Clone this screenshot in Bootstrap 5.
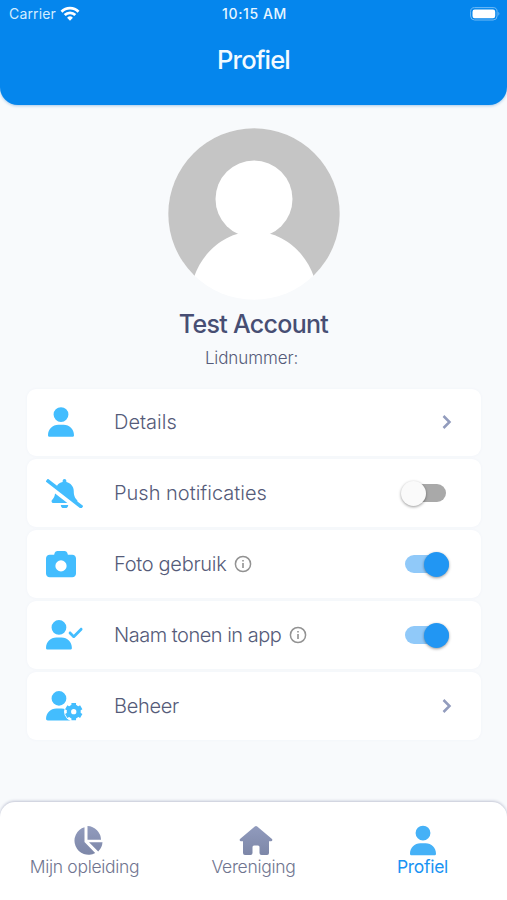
<!DOCTYPE html>
<html lang="nl">
<head>
<meta charset="utf-8">
<meta name="viewport" content="width=device-width, initial-scale=1">
<title>Profiel</title>
<link href="https://cdn.jsdelivr.net/npm/bootstrap@5.3.0/dist/css/bootstrap.min.css" rel="stylesheet">
<style>
body{font-family:Inter,"Open Sans",sans-serif;background:#f8fafc;color:#555b79;height:900px;overflow:hidden}
svg{display:block;flex:none}
.app-head{height:105px;background:#0586ed;border-radius:0 0 18px 18px;box-shadow:0 1px 3px #a9c9e8}
.status{height:27px;padding:0 7px 0 9px;font-size:14px}
.status>*{flex:1 1 0}
.carrier{color:#d3edff;letter-spacing:.15px}
.clock{font-size:14px;font-weight:500;letter-spacing:.6px;color:#e8f6ff}
.page-title{font-size:25.5px;line-height:30px;font-weight:500;letter-spacing:-.85px;margin-top:18px;color:#f3faff}
.avatar{margin:23px auto 0}
.who{font-size:25px;line-height:30px;font-weight:500;letter-spacing:-.7px;margin-top:9px;color:#474e73}
.member{font-size:17px;line-height:22px;font-weight:300;letter-spacing:-.1px;margin-top:8px;margin-right:4px}
.options{margin:19.5px 26px 0 27px;gap:3px}
.option{height:67.9px;border-radius:9px;background:#fff;box-shadow:0 0 3px #f0f2f8;padding:0 28px 0 19px}
.glyph{width:68px;color:#43bdfe}
.label{font-size:20px;font-weight:300;letter-spacing:-.5px;line-height:26px;white-space:nowrap}
.label.wide{letter-spacing:0}
.label.mid{letter-spacing:-.3px}
.toggle{width:44px;height:18px;border-radius:9px;background:#90c9f9;margin-right:4px}
.toggle i{width:25px;height:25px;border-radius:50%;background:#2196f3;box-shadow:0 1px 3px #0006}
.toggle.off{background:#a9a9a9;width:41px;margin-right:7px}
.toggle.off i{background:#fafafa;margin-left:-4px}
.tabs{height:98.5px;background:#fff;border-radius:15px 15px 0 0;box-shadow:0 -1px 3px #bfc3d3;padding-top:23px}
.tab{flex:1 1 0;font-size:17.5px;font-weight:300;line-height:22px;color:#70758f;white-space:nowrap;letter-spacing:-.3px}
.tab .pie{margin-left:4px}
.tab.current{color:#1993f3;font-weight:400}
</style>
<script src="https://cdn.jsdelivr.net/npm/bootstrap@5.3.0/dist/js/bootstrap.bundle.min.js"></script>
</head>
<body class="d-flex flex-column">
<svg width="0" height="0" class="position-absolute">
<defs>
<linearGradient id="slate" x2="0" y2="1"><stop stop-color="#919bbd"/><stop offset="1" stop-color="#7d87a8"/></linearGradient>
<symbol id="user" viewBox="0 0 448 512"><path d="M224 256A128 128 0 1 0 224 0a128 128 0 1 0 0 256zm-45.700 48C79.800 304 0 383.800 0 482.300C0 498.700 13.300 512 29.700 512H418.300c16.400 0 29.700-13.300 29.700-29.700C448 383.800 368.200 304 269.700 304H178.300z"/></symbol>
<symbol id="info" viewBox="0 0 18 18"><circle cx="9" cy="9" r="7.600" fill="none" stroke="#929292" stroke-width="1.500"/><path d="M8.200 8h1.600v5H8.200zM8.200 5h1.600v1.600H8.200z" fill="#929292"/></symbol>
<symbol id="next" viewBox="0 0 12 18"><path d="M2.500 3l6 6-6 6" fill="none" stroke="#929cbd" stroke-width="2.500"/></symbol>
</defs>
</svg>

<header class="app-head">
  <div class="status d-flex align-items-center">
    <div class="carrier d-flex align-items-center gap-1"><span>Carrier</span>
      <svg width="20" height="16" viewBox="0 0 20 16" fill="none" stroke="#fff" stroke-width="2.800"><path d="M1.500 5.700a12 12 0 0 1 17 0M4.700 9a7.500 7.500 0 0 1 10.600 0"/><path d="M10 14.700l-2.900-3a4.100 4.100 0 0 1 5.800 0z" fill="#fff" stroke="none"/></svg>
    </div>
    <div class="clock text-center">10:15 AM</div>
    <div class="d-flex justify-content-end"><svg width="30" height="14" viewBox="0 0 30 14"><rect x=".600" y=".600" width="26.500" height="12.400" rx="4" fill="none" stroke="#70baf5"/><rect x="2.500" y="2.500" width="22.700" height="8.700" rx="2.200" fill="#fff"/><path d="M28.400 4.800q2 2 0 4z" fill="#70baf5"/></svg></div>
  </div>
  <h1 class="page-title text-center mb-0">Profiel</h1>
</header>

<main class="flex-grow-1">
  <svg class="avatar" width="172" height="172" viewBox="0 0 172 172"><clipPath id="round"><circle cx="86" cy="86" r="85.700"/></clipPath><g clip-path="url(#round)"><path fill="#fff" d="M0 0h172v172H0z"/><path fill="#c5c5c5" d="M0 0h172v148H0z"/><circle cx="86" cy="71" r="38.500" fill="#fff"/><path fill="#fff" d="M26 149C35 123 58 103.500 86 103.500s51 19.500 60 45.500z"/></g></svg>
  <h2 class="who text-center mb-0">Test Account</h2>
  <p class="member text-center mb-0">Lidnummer:</p>

  <div class="options d-flex flex-column">
    <div class="option d-flex align-items-center">
      <div class="glyph"><svg style="margin-left:2px" width="26" height="30" fill="currentColor"><use href="#user"/></svg></div>
      <span class="label wide">Details</span><svg class="ms-auto" width="12" height="18"><use href="#next"/></svg>
    </div>
    <div class="option d-flex align-items-center">
      <div class="glyph"><svg width="37" height="29.600" viewBox="0 0 640 512" fill="currentColor"><path d="M633.820 458.100l-90.620-70.050c.190-1.380.800-2.660.800-4.060.050-7.550-2.610-15.270-8.610-21.710-19.320-20.760-55.470-51.990-55.470-154.290 0-77.700-54.480-139.900-127.940-155.160V32c0-17.670-14.320-32-31.980-32s-31.980 14.330-31.980 32v20.840c-40.330 8.380-74.660 31.070-97.590 62.570L45.470 3.370C38.490-2.050 28.430-.800 23.010 6.180L3.370 31.450C-2.050 38.420-.800 48.470 6.180 53.900l588.350 454.730c6.980 5.430 17.030 4.170 22.460-2.810l19.640-25.270c5.420-6.970 4.170-17.020-2.810-22.450zM157.230 251.540c-8.610 67.960-36.410 93.330-52.620 110.750-6 6.450-8.660 14.160-8.610 21.710.110 16.400 12.980 32 32.100 32h241.120L157.230 251.540zM320 512c35.320 0 63.970-28.650 63.970-64H256.030c0 35.350 28.650 64 63.970 64z"/></svg></div>
      <span class="label wide">Push notificaties</span><div class="toggle off ms-auto d-flex align-items-center"><i></i></div>
    </div>
    <div class="option d-flex align-items-center">
      <div class="glyph"><svg width="30" height="30" viewBox="0 0 512 512" fill="currentColor"><path d="M149.100 64.800L138.700 96H64C28.700 96 0 124.700 0 160V416c0 35.300 28.700 64 64 64H448c35.300 0 64-28.700 64-64V160c0-35.300-28.700-64-64-64H373.300L362.900 64.800C356.400 45.200 338.100 32 317.400 32H194.600c-20.700 0-39 13.200-45.500 32.800zM256 192a96 96 0 1 1 0 192 96 96 0 1 1 0-192z"/></svg></div>
      <span class="label mid">Foto gebruik</span><svg class="ms-2" width="18" height="18"><use href="#info"/></svg><div class="toggle ms-auto d-flex align-items-center justify-content-end"><i></i></div>
    </div>
    <div class="option d-flex align-items-center">
      <div class="glyph"><svg width="37" height="29.600" viewBox="0 0 640 512" fill="currentColor"><path d="M96 128a128 128 0 1 1 256 0A128 128 0 1 1 96 128zM0 482.300C0 383.800 79.800 304 178.300 304h91.400C368.200 304 448 383.800 448 482.300c0 16.400-13.300 29.700-29.700 29.700H29.700C13.300 512 0 498.700 0 482.300zM625 177L497 305c-9.400 9.400-24.600 9.400-33.900 0l-64-64c-9.400-9.400-9.400-24.600 0-33.900s24.600-9.400 33.900 0l47 47L591 143c9.400-9.400 24.600-9.400 33.900 0s9.400 24.600 0 33.900z"/></svg></div>
      <span class="label">Naam tonen in app</span><svg class="ms-2" width="18" height="18"><use href="#info"/></svg><div class="toggle ms-auto d-flex align-items-center justify-content-end"><i></i></div>
    </div>
    <div class="option d-flex align-items-center">
      <div class="glyph"><svg width="37" height="30" viewBox="0 0 640 520" fill="currentColor"><path d="M96 128a128 128 0 1 1 256 0A128 128 0 1 1 96 128zM0 482.300C0 383.800 79.800 304 178.300 304h91.400C368.200 304 448 383.800 448 482.300c0 16.400-13.300 29.700-29.700 29.700H29.700C13.300 512 0 498.700 0 482.300z"/><circle cx="480" cy="358" r="168" fill="#fff"/><g transform="translate(480 358)"><circle r="84" fill="none" stroke="currentColor" stroke-width="76"/><path d="M0-95V-150M0 95V150M82-47l48-28M-82 47l-48 28M82 47l48 28M-82-47l-48-28" stroke="currentColor" stroke-width="80"/></g></svg></div>
      <span class="label mid">Beheer</span><svg class="ms-auto" width="12" height="18"><use href="#next"/></svg>
    </div>
  </div>
</main>

<nav class="tabs d-flex">
  <div class="tab d-flex flex-column align-items-center"><svg class="pie" width="32" height="31" viewBox="0 0 32 31" fill="url(#slate)"><path d="M13.500 2.300V17l10.700 11A14 14 0 1 1 13.500 2.300zM16.500 1A14 14 0 0 1 30 14.700H16.500zM18 17.200h13.500a14 14 0 0 1-4.300 9.200z"/></svg>Mijn opleiding</div>
  <div class="tab d-flex flex-column align-items-center"><svg class="ms-1" width="34" height="31" viewBox="0 0 34 31" fill="url(#slate)"><path d="M15.800 1.500q1.200-1 2.400 0L33 14q1 1.600-.800 2.300H30V28q0 2-2 2h-5.500q-2 0-2-2v-6q0-1.500-1.500-1.500h-4q-1.500 0-1.500 1.500v6q0 2-2 2H6q-2 0-2-2V16.300H1.800Q0 15.600 1 14z"/></svg>Vereniging</div>
  <div class="tab current d-flex flex-column align-items-center"><svg width="26" height="31" fill="#45b1f7"><use href="#user"/></svg>Profiel</div>
</nav>
</body>
</html>
